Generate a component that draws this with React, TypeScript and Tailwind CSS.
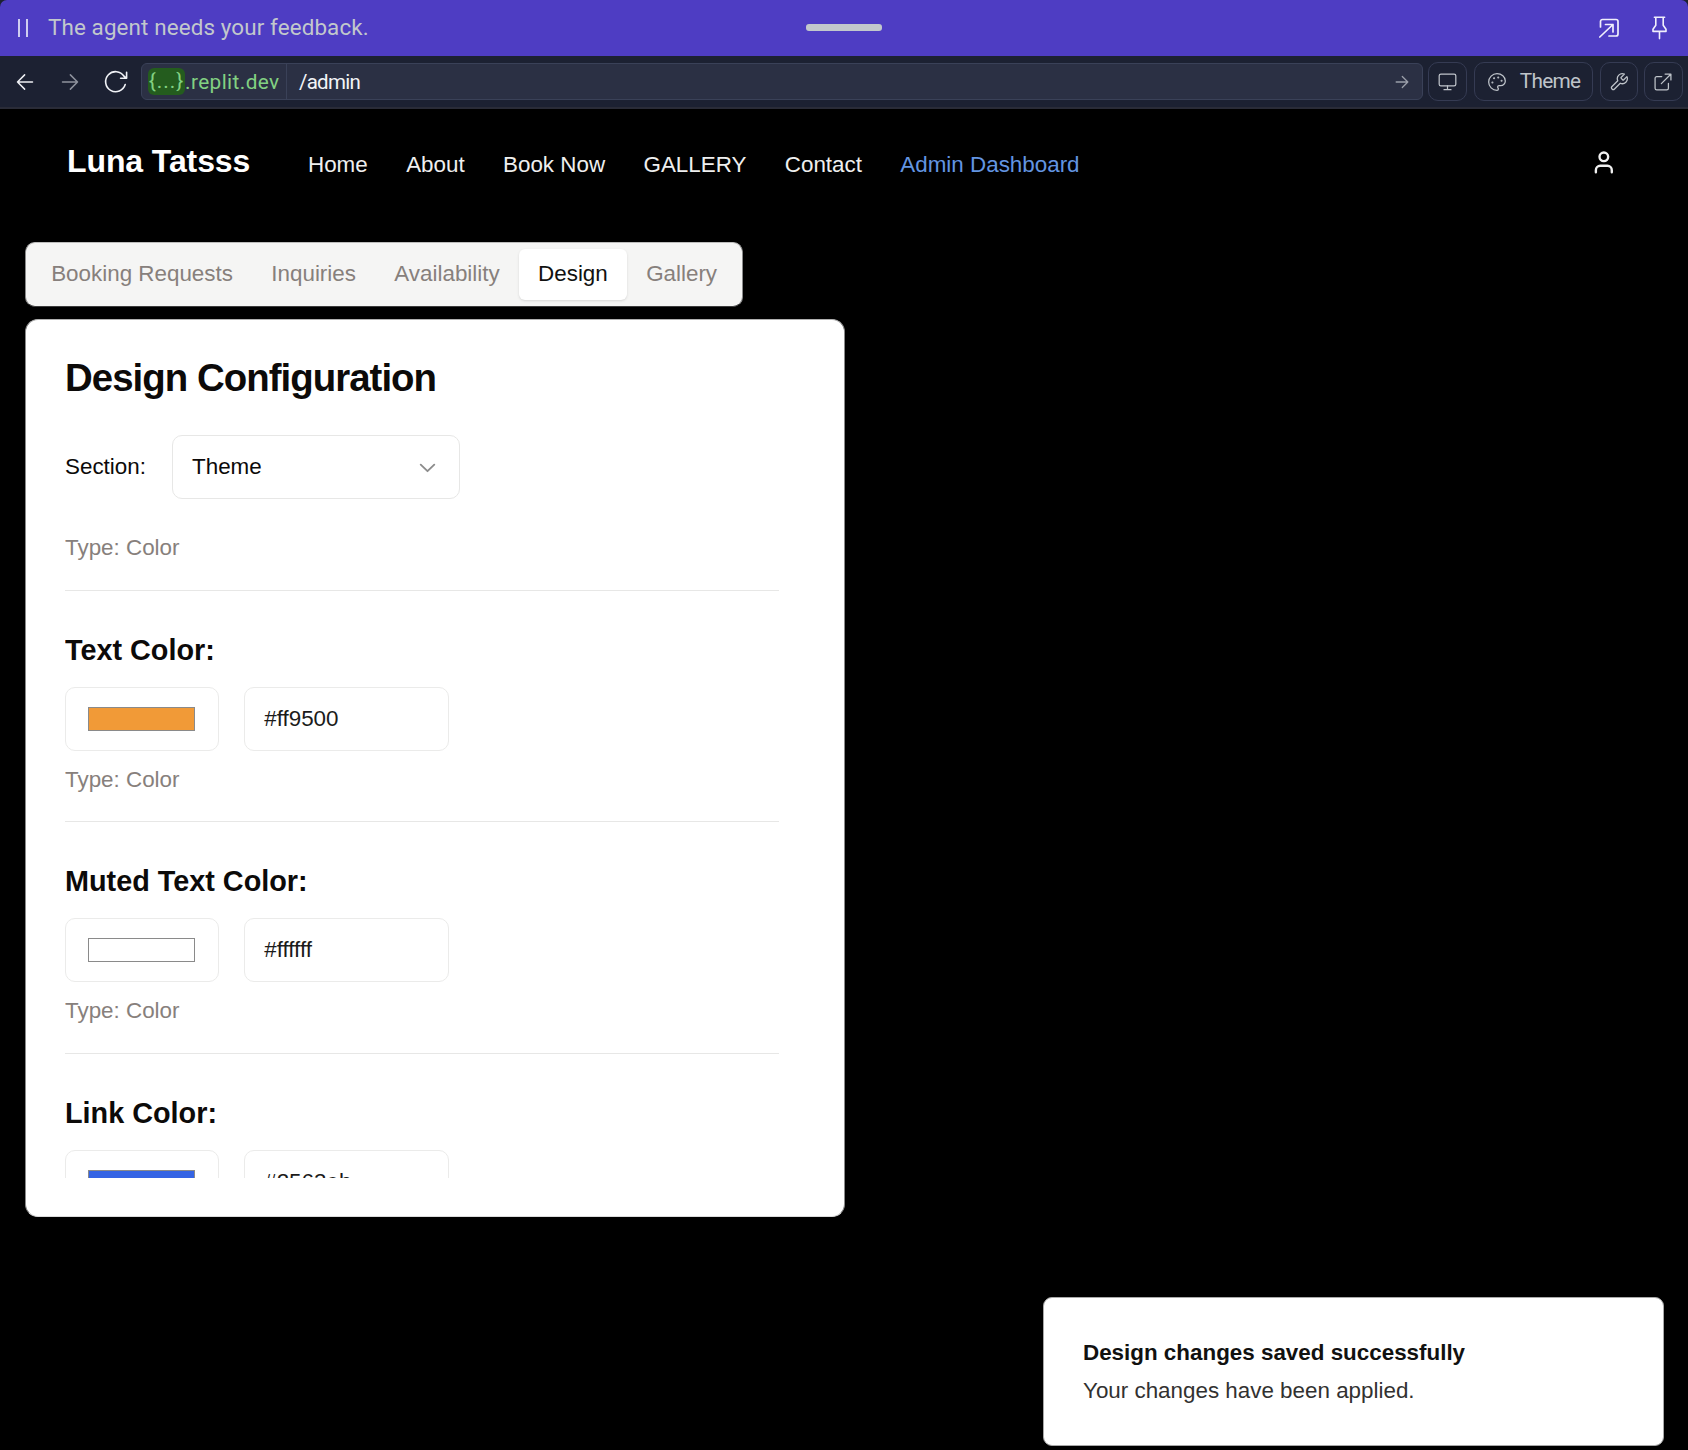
import React from "react";

const Arrow = ({ size, w, className }: { size: number; w: number; className?: string }) => (
  <svg width={size} height={size} viewBox="0 0 24 24" fill="none" stroke="currentColor" strokeWidth={w} strokeLinecap="round" strokeLinejoin="round" className={className}>
    <path d="M2 12h20M12.5 2.5 22 12l-9.5 9.5" />
  </svg>
);

const Icon = ({ size = 20, w = 1.5, children, className }: { size?: number; w?: number; children: React.ReactNode; className?: string }) => (
  <svg width={size} height={size} viewBox="0 0 24 24" fill="none" stroke="currentColor" strokeWidth={w} strokeLinecap="round" strokeLinejoin="round" className={className}>
    {children}
  </svg>
);

function AgentBar() {
  return (
    <div className="relative flex h-14 items-center rounded-t-[7px] bg-[#4e3dc3] pl-[18px] pr-4 font-[Roboto,sans-serif]">
      <div className="flex h-[18px] w-[10px] justify-between">
        <span className="w-[2px] bg-[#cfcdf0]" />
        <span className="w-[2px] bg-[#cfcdf0]" />
      </div>
      <span className="ml-[20px] pb-[2px] text-[22.4px] leading-8 tracking-[0.12px] text-[#c2c8cc]">The agent needs your feedback.</span>
      <div className="absolute left-[806px] top-6 h-[7px] w-[76px] rounded-[3px] bg-[#c2c8cc]" />
      <div className="ml-auto flex items-center text-[#f0effc]">
        <Icon size={24} w={1.7} className="mr-[26px]">
          <path d="M3.500 11V5.500a2 2 0 0 1 2-2h13.500a2 2 0 0 1 2 2V18a2 2 0 0 1-2 2H12" />
          <path d="M8.500 8.500h7.500v7.500M16 8.500 2.800 21" />
        </Icon>
        <svg width="25" height="26" viewBox="0 0 25 26" fill="none" stroke="currentColor" strokeWidth="1.6" strokeLinecap="round" strokeLinejoin="round">
          <path d="M7.4 2.2h10.2M8.8 2.4v7.8L6 14.2v2.2h13v-2.2l-2.8-4V2.4M12.5 16.6v7" />
        </svg>
      </div>
    </div>
  );
}

const toolButton = "flex h-[39px] shrink-0 items-center justify-center rounded-[10px] border border-[#353b53] text-[#bfc4ca]";

function Toolbar() {
  return (
    <div className="flex h-[53px] items-start border-b-2 border-[#2a2c38] bg-[#1c2132] pl-[17px] pt-[6px] font-[Roboto,sans-serif]">
      <div className="mt-px flex h-[37px] w-[111px] shrink-0 items-center">
        <Arrow size={18} w={2} className="-ml-px shrink-0 rotate-180 text-[#eef0f4]" />
        <Arrow size={18} w={2} className="ml-[27px] shrink-0 text-[#8e929d]" />
        <svg width="25" height="25" viewBox="0 0 25 25" fill="none" stroke="#f0f2f6" strokeWidth="1.6" strokeLinecap="round" strokeLinejoin="round" className="ml-[23.5px] shrink-0">
          <path d="M22.2 15.6A10 10 0 1 1 21 7.200l2.200 2M23.600 3.200v6h-6" />
        </svg>
      </div>
      <div className="ml-[13px] mt-px flex h-[37px] w-[1282px] shrink-0 items-center rounded-[6px] border border-[#3a4158] bg-[#2b3044] text-[20.8px]">
        <div className="flex h-full w-[145px] items-center border-r border-[#3a4158] pl-[6px] text-[#82d182]">
          <span className="flex h-[27px] w-[37px] items-center justify-center rounded-[6px] bg-[#245c1e] tracking-[1px]">{"{...}"}</span>
          <span className="pt-[2px] tracking-[0.4px]">.replit.dev</span>
        </div>
        <span className="ml-[12px] pt-[2px] text-[20.5px] tracking-[-0.75px] text-[#f2f4f7]">/admin</span>
        <Arrow size={14} w={2.2} className="ml-auto mr-[13px] text-[#9a9ea9]" />
      </div>
      <div className={`${toolButton} ml-[5px] w-[39px]`}>
        <Icon size={21} w={1.4}>
          <rect x="2.5" y="3.5" width="19" height="13.5" rx="2" />
          <path d="M12 17v4M8 21.3h8" />
        </Icon>
      </div>
      <div className={`${toolButton} ml-[7px] w-[119px]`}>
        <Icon size={20} w={1.5} className="shrink-0">
          <path d="M12 2C6.5 2 2 6.5 2 12s4.5 10 10 10c.93 0 1.65-.75 1.65-1.69 0-.43-.18-.83-.44-1.12-.29-.29-.44-.65-.44-1.13a1.64 1.64 0 0 1 1.67-1.66h1.99c3.05 0 5.56-2.5 5.56-5.55C21.96 6.01 17.46 2 12 2z" />
          <circle cx="13.5" cy="6.5" r=".5" fill="currentColor" />
          <circle cx="17.5" cy="10.5" r=".5" fill="currentColor" />
          <circle cx="8.5" cy="7.5" r=".5" fill="currentColor" />
          <circle cx="6.5" cy="12.5" r=".5" fill="currentColor" />
        </Icon>
        <span className="ml-[13px] text-[20.8px] tracking-[-0.75px]">Theme</span>
      </div>
      <div className={`${toolButton} ml-[7px] w-[38px]`}>
        <Icon size={20} w={1.5}>
          <path d="M14.7 6.3a1 1 0 0 0 0 1.4l1.6 1.6a1 1 0 0 0 1.4 0l3.77-3.77a6 6 0 0 1-7.94 7.94l-6.91 6.91a2.12 2.12 0 0 1-3-3l6.91-6.91a6 6 0 0 1 7.94-7.94l-3.76 3.76z" />
        </Icon>
      </div>
      <div className={`${toolButton} ml-[6px] w-[39px] pr-px`}>
        <Icon size={20} w={1.5}>
          <path d="M14.5 2.5h7v7M21 3 10 14" />
          <path d="M18.5 13.5v6a2 2 0 0 1-2 2h-12a2 2 0 0 1-2-2v-12a2 2 0 0 1 2-2h6" />
        </Icon>
      </div>
    </div>
  );
}

function SiteHeader() {
  return (
    <header className="flex h-[133px] items-start pl-[67px] pr-[71px]">
      <h1 className="mt-[32px] w-[241px] text-[32px] font-bold leading-10 tracking-[-0.1px] text-white">Luna Tatsss</h1>
      <nav className="mt-[40px] flex gap-[38.4px] text-[22.4px] leading-8 text-[#efefef]">
        <span>Home</span>
        <span>About</span>
        <span>Book Now</span>
        <span>GALLERY</span>
        <span>Contact</span>
        <span className="text-[#6395e2]">Admin Dashboard</span>
      </nav>
      <Icon size={26} w={2.2} className="ml-auto mt-10 text-[#f0f0f0]">
        <path d="M19.200 21.500v-2a4 4 0 0 0-4-4H8.500a4 4 0 0 0-4 4v2" />
        <circle cx="11.850" cy="7.200" r="4" />
      </Icon>
    </header>
  );
}

const tabs = ["Booking Requests", "Inquiries", "Availability", "Design", "Gallery"];

function Tabs() {
  return (
    <div className="ml-[25px] flex h-[65px] w-[718px] items-center rounded-[10px] border border-b-[#3c3c3c] border-l-[#8a8a8a] border-r-[#8a8a8a] border-t-[#bdbdbc] bg-[#f5f5f4] pb-px pl-[6px] text-[22.4px] leading-8 text-[#87807c]">
      {tabs.map((t) => (
        <div
          key={t}
          className={
            t === "Design"
              ? "flex h-[51px] items-center rounded-[6px] bg-white px-[19.2px] text-[#111110] shadow-sm"
              : "flex h-[51px] items-center px-[19.2px]"
          }
        >
          {t}
        </div>
      ))}
    </div>
  );
}

function ColorField({ name, swatch, value }: { name: string; swatch: string; value: string }) {
  return (
    <div className="border-t border-[#e7e7e6] pb-[25.4px] pt-[39px]">
      <h3 className="text-[28.8px] font-bold leading-10">{name}:</h3>
      <div className="mt-[17px] flex gap-[25px]">
        <div className="flex h-16 w-[154px] items-center rounded-[10px] border border-[#ebebea] pl-[22.4px]">
          <div className="h-6 w-[107px] border border-[#8a8a8a]" style={{ backgroundColor: swatch }} />
        </div>
        <div className="flex h-16 w-[205px] items-center rounded-[10px] border border-[#ebebea] pl-[19.2px] text-[22.4px] leading-8 text-[#1b1b1a]">{value}</div>
      </div>
      <p className="mt-[13px] text-[22.4px] leading-8 text-[#87807c]">Type: Color</p>
    </div>
  );
}

function DesignCard() {
  return (
    <section className="ml-[25px] mt-[12px] h-[898px] w-[820px] rounded-[13px] border border-b-[#dcdcdc] border-l-[#8a8a8a] border-r-[#8a8a8a] border-t-[#b0b0b0] bg-white pl-[39px] pt-[39px] text-[#0c0a09]">
      <h2 className="text-[38.4px] font-bold leading-[38px] tracking-[-0.96px]">Design Configuration</h2>
      <div className="mt-[38px] flex h-16 items-center text-[22.4px] leading-8">
        <span className="w-[107px]">Section:</span>
        <div className="flex h-16 w-[288px] items-center rounded-[10px] border border-[#e7e7e6] pl-[19px] pr-[19px]">
          <span>Theme</span>
          <Icon size={25} w={1.8} className="ml-auto text-[#8c8c8c]">
            <path d="m5.500 9.300 6.500 6.200L18.500 9.300" />
          </Icon>
        </div>
      </div>
      <div className="h-[679px] w-[714px] overflow-hidden pt-[33px]">
        <p className="mb-[26px] text-[22.4px] leading-8 text-[#87807c]">Type: Color</p>
        <ColorField name="Text Color" swatch="#f19a37" value="#ff9500" />
        <ColorField name="Muted Text Color" swatch="#ffffff" value="#ffffff" />
        <div className="pt-[0.5px]">
          <ColorField name="Link Color" swatch="#3564e4" value="#2563eb" />
        </div>
      </div>
    </section>
  );
}

function Toast() {
  return (
    <div className="absolute left-[1043px] top-[1297px] h-[149px] w-[621px] rounded-[9px] border border-[#a8a8a8] bg-white pl-[39px] pt-[39px] text-[22.4px]">
      <p className="leading-8 font-bold text-[#111110]">Design changes saved successfully</p>
      <p className="mt-[6px] leading-8 text-[#323130]">Your changes have been applied.</p>
    </div>
  );
}

export default function App() {
  return (
    <div className="relative h-[1450px] w-[1688px] overflow-hidden bg-black font-['Liberation_Sans',Arial,sans-serif]">
      <div className="bg-[#1c2132]">
        <AgentBar />
        <Toolbar />
      </div>
      <SiteHeader />
      <Tabs />
      <DesignCard />
      <Toast />
    </div>
  );
}
